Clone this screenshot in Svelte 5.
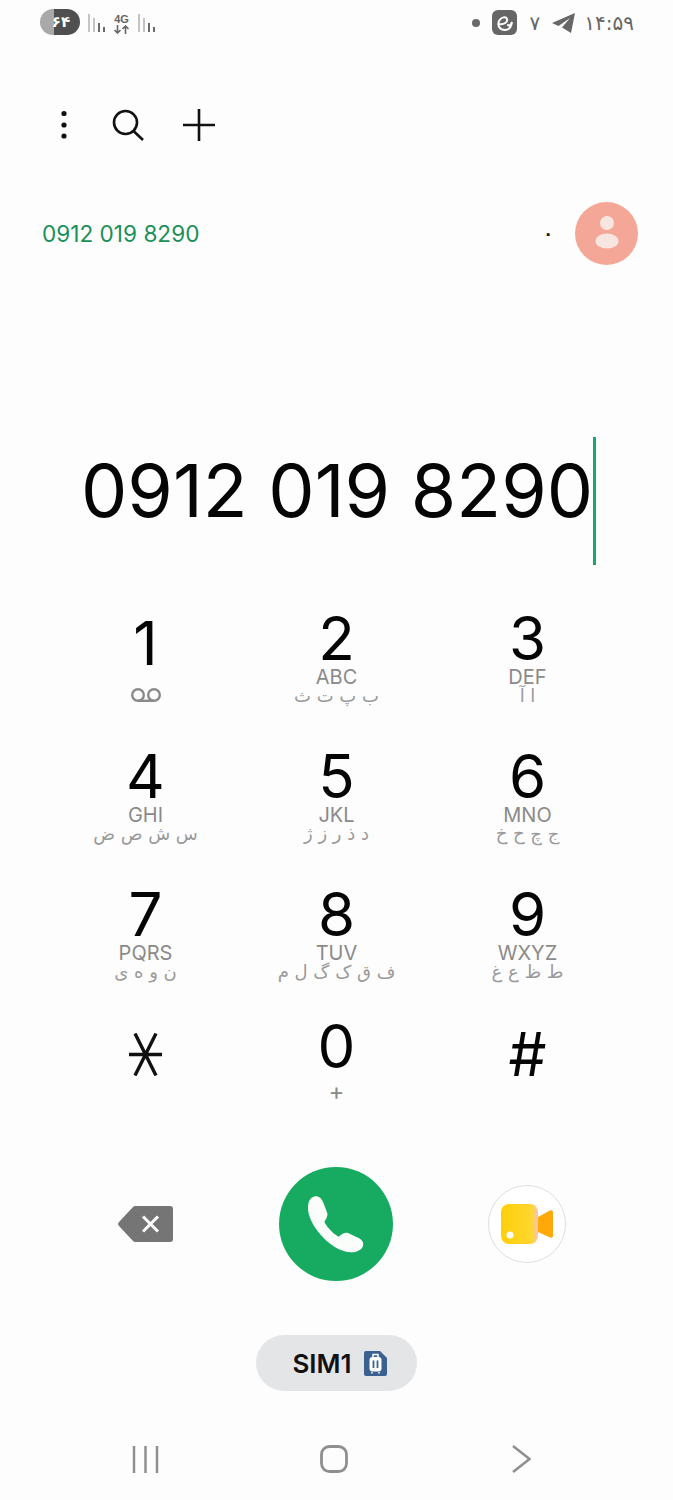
<script>
  const keys = [
    { digit: '1', voicemail: true },
    { digit: '2', latin: 'ABC', farsi: 'ب پ ت ث' },
    { digit: '3', latin: 'DEF', farsi: 'ا آ' },
    { digit: '4', latin: 'GHI', farsi: 'س ش ص ض' },
    { digit: '5', latin: 'JKL', farsi: 'د ذ ر ز ژ' },
    { digit: '6', latin: 'MNO', farsi: 'ج چ ح خ' },
    { digit: '7', latin: 'PQRS', farsi: 'ن و ه ی' },
    { digit: '8', latin: 'TUV', farsi: 'ف ق ک گ ل م' },
    { digit: '9', latin: 'WXYZ', farsi: 'ط ظ ع غ' },
    { star: true },
    { digit: '0', plus: true },
    { digit: '#', hash: true }
  ];
  const bars = [18, 14, 9, 5];
</script>

<div class="screen">
  <header class="status">
    <div class="status-side">
      <div class="battery"><span>۶۴</span></div>
      <div class="signal">
        {#each bars as h, i}<i class:on={i > 1} style="height: {h}px"></i>{/each}
      </div>
      <div class="net">
        <b>4G</b>
        <svg width="17" height="9" viewBox="0 0 17 9" fill="none" stroke="#666" stroke-width="1.6">
          <path d="M4.500 0v8M1.500 5l3 3 3-3M12.500 9V1M9.500 4l3-3 3 3" />
        </svg>
      </div>
      <div class="signal">
        {#each bars as h, i}<i class:on={i > 1} style="height: {h}px"></i>{/each}
      </div>
    </div>
    <div class="status-side right">
      <i class="notif-dot"></i>
      <svg width="25" height="25" viewBox="0 0 25 25">
        <rect width="25" height="25" rx="6" fill="#666" />
        <path d="M7 14c5 1 9-2 8-5-1-3-6-2-8 2-2 5 1 9 6 9 4 0 6-2 7-8-1 3-3 4-4 3" fill="none" stroke="#fff" stroke-width="2" stroke-linecap="round" />
      </svg>
      <span class="sb-num">۷</span>
      <svg class="plane" width="23" height="20" viewBox="0 0 23 20">
        <path d="M23 0 0 10l6.500 3L18 5l-8 9.500L19 20z" fill="#666" />
      </svg>
      <span class="sb-time">۱۴:۵۹</span>
    </div>
  </header>

  <nav class="toolbar">
    <svg width="10" height="32" viewBox="0 0 10 32" fill="#111">
      <circle cx="5" cy="4.500" r="2.600" /><circle cx="5" cy="16" r="2.600" /><circle cx="5" cy="27" r="2.600" />
    </svg>
    <svg width="32" height="32" viewBox="0 0 32 32" fill="none" stroke="#111" stroke-width="2.600">
      <circle cx="13.500" cy="13.500" r="11.500" /><path d="M21.500 22 31 31" />
    </svg>
    <svg width="32" height="32" viewBox="0 0 32 32" fill="none" stroke="#111" stroke-width="2.600">
      <path d="M16 0v32M0 16h32" />
    </svg>
  </nav>

  <section class="match">
    <span class="match-number">0912 019 8290</span>
    <span class="match-dot">۰</span>
    <div class="avatar">
      <svg width="32" height="36" viewBox="0 0 32 36" fill="#f7e6df">
        <circle cx="16" cy="8" r="7" /><ellipse cx="16" cy="26" rx="11.500" ry="7.500" />
      </svg>
    </div>
  </section>

  <section class="entry">
    <span class="entry-number">0912 019 8290</span><i class="caret"></i>
  </section>

  <section class="keypad">
    {#each keys as key}
      <div class="key">
        {#if key.star}
          <svg class="star" width="33" height="43" viewBox="0 0 33 43" fill="none" stroke="#111" stroke-width="3.400">
            <path d="M6 0.500 27 42.500M27 0.500 6 42.500M0 21.500h33" />
          </svg>
        {:else}
          <span class="digit" class:hash={key.hash} class:one={key.voicemail} class:zero={key.plus}>{key.digit}</span>
        {/if}
        {#if key.latin}
          <span class="latin">{key.latin}</span>
          <span class="farsi" dir="rtl">{key.farsi}</span>
        {/if}
        {#if key.voicemail}
          <svg class="voicemail" width="32" height="14" viewBox="0 0 32 14" fill="none" stroke="#8a8a8a" stroke-width="2.400">
            <circle cx="8" cy="7" r="5.800" /><circle cx="24" cy="7" r="5.800" /><path d="M8 12.800h16" />
          </svg>
        {/if}
        {#if key.plus}
          <span class="plus">+</span>
        {/if}
      </div>
    {/each}
  </section>

  <section class="actions">
    <svg width="55" height="36" viewBox="0 0 55 36">
      <path d="M17 0h35a3 3 0 0 1 3 3v30a3 3 0 0 1-3 3H17a3 3 0 0 1-2-1L1 20a3 3 0 0 1 0-4L15 1a3 3 0 0 1 2-1z" fill="#757575" />
      <path d="M25 10.500 40 25.500M40 10.500 25 25.500" stroke="#fff" stroke-width="3" />
    </svg>
    <button class="call" aria-label="Call">
      <svg width="60" height="60" viewBox="620 130 180 180">
        <path d="M628 155C632 143 642 136 652 137 662 138 668 146 672 156L684 188C686 196 680 206 675 214 685 232 702 250 718 258 726 252 736 244 746 247L778 262C788 267 794 276 791 286 788 298 770 306 752 305 722 303 688 282 660 248 636 218 620 186 628 155Z" fill="#fbfdfb" />
      </svg>
    </button>
    <button class="video" aria-label="Video call">
      <svg width="52" height="40" viewBox="0 0 52 40">
        <defs>
          <linearGradient id="cam" x1="0" x2="1" y1="0" y2="0">
            <stop offset="0" stop-color="#ffcf0a" />
            <stop offset="0.82" stop-color="#ffd62e" />
            <stop offset="1" stop-color="#f8c4b8" />
          </linearGradient>
        </defs>
        <rect x="0" y="0" width="37" height="40" rx="8" fill="url(#cam)" />
        <circle cx="9" cy="31" r="3.500" fill="#fff" />
        <path d="M37 13 49 6.500q3-1 3 2v23q0 3-3 2L37 28z" fill="#ffa908" />
      </svg>
    </button>
  </section>

  <div class="sim-row">
    <div class="sim">
      <span>SIM1</span>
      <svg width="23" height="25" viewBox="0 0 23 25">
        <path d="M2 0h14l7 7v16a2 2 0 0 1-2 2H2a2 2 0 0 1-2-2V2a2 2 0 0 1 2-2z" fill="#3a6190" />
        <path d="M9 6V3.500h5V6" fill="none" stroke="#fff" stroke-width="1.500" />
        <rect x="5.500" y="6" width="12" height="14.500" rx="3" fill="#fff" />
        <path d="M9.500 9.500v7.500M13.500 9.500v7.500" stroke="#3a6190" stroke-width="1.800" />
        <path d="M8 21v1.500M15 21v1.500" stroke="#fff" stroke-width="1.500" />
      </svg>
    </div>
  </div>

  <footer class="navbar">
    <svg width="27" height="27" viewBox="0 0 27 27" stroke="#8f8f8f" stroke-width="2.500">
      <path d="M2 0v27M13.500 0v27M25 0v27" />
    </svg>
    <svg class="home" width="28" height="28" viewBox="0 0 28 28" fill="none" stroke="#8f8f8f" stroke-width="2.800">
      <rect x="1.500" y="1.500" width="25" height="25" rx="8" />
    </svg>
    <svg width="19" height="28" viewBox="0 0 19 28" fill="none" stroke="#8f8f8f" stroke-width="2.500">
      <path d="M1 1 17.500 14 1 27" />
    </svg>
  </footer>
</div>

<style>
  :global(body) {
    margin: 0;
    background: #fdfdfe;
  }
  .screen {
    width: 673px;
    height: 1500px;
    overflow: hidden;
    font-family: Inter, "Liberation Sans", sans-serif;
    color: #0c0c0c;
    background: #fdfdfe;
  }

  /* status bar */
  .status {
    height: 45px;
    box-sizing: border-box;
    padding: 9px 39px 0 40px;
    display: flex;
    justify-content: space-between;
  }
  .status-side {
    display: flex;
    align-items: flex-start;
  }
  .status-side.right {
    align-items: center;
    height: 27px;
  }
  .battery {
    width: 40px;
    height: 26px;
    border-radius: 13px;
    background: linear-gradient(90deg, #a9a9a9 0 14px, #4f4f4f 14px);
    display: flex;
    align-items: center;
    justify-content: center;
  }
  .battery span {
    font: 700 15px "DejaVu Sans", sans-serif;
    color: #fff;
    margin-left: 2px;
  }
  .signal {
    display: flex;
    align-items: flex-end;
    gap: 3px;
    height: 18px;
    margin: 5px 0 0 8px;
  }
  .signal i {
    width: 2px;
    background: #c4c4c4;
  }
  .signal i.on {
    background: #6a6a6a;
  }
  .net {
    display: flex;
    flex-direction: column;
    align-items: center;
    margin: 4px 0 0 8px;
    width: 17px;
  }
  .net b {
    font: 700 11px/12px "Liberation Sans", sans-serif;
    color: #666;
  }
  .notif-dot {
    width: 8px;
    height: 8px;
    border-radius: 50%;
    background: #6a6a6a;
    margin-right: 12px;
  }
  .sb-num {
    font: 400 20px "DejaVu Sans", sans-serif;
    color: #666;
    margin: 0 12px 0 13px;
  }
  .sb-time {
    font: 400 20px "DejaVu Sans", sans-serif;
    color: #666;
    margin-left: 9px;
  }

  /* top actions */
  .toolbar {
    height: 32px;
    margin-top: 64px;
    padding-left: 59px;
    display: flex;
    align-items: center;
    gap: 43px;
  }
  .toolbar svg:nth-child(3) {
    margin-left: -4px;
  }

  /* suggested contact */
  .match {
    margin-top: 60px;
    padding: 0 35px 0 42px;
    height: 64px;
    display: flex;
    align-items: center;
  }
  .match-number {
    font-size: 22.6px;
    color: #1a9058;
  }
  .match-dot {
    margin-left: auto;
    margin-right: 22px;
    font: 700 16px "DejaVu Sans", sans-serif;
    color: #111;
  }
  .avatar {
    width: 63px;
    height: 63px;
    border-radius: 50%;
    background: #f4a796;
    display: flex;
    align-items: center;
    justify-content: center;
  }

  /* dialled number */
  .entry {
    margin-top: 172px;
    height: 128px;
    padding-left: 81px;
    display: flex;
    align-items: center;
  }
  .entry-number {
    font-size: 73.5px;
    color: #050505;
    line-height: 1;
    margin-bottom: 20px;
  }
  .caret {
    width: 3px;
    height: 128px;
    background: #1aa866;
  }

  /* dial pad */
  .keypad {
    margin-top: 46px;
    padding: 0 50px;
    display: grid;
    grid-template-columns: repeat(3, 191px);
    grid-auto-rows: 138px;
  }
  .key {
    display: flex;
    flex-direction: column;
    align-items: center;
  }
  .digit {
    font-size: 60px;
    line-height: 54px;
    color: #050505;
  }
  .digit.one {
    margin-top: 5px;
  }
  .digit.zero {
    margin-top: -6px;
  }
  .digit.hash {
    margin-top: 2px;
  }
  .latin {
    font-size: 20px;
    line-height: 18px;
    color: #8a8a8a;
    margin-top: 3px;
  }
  .farsi {
    font: 400 18px/20px "DejaVu Sans", sans-serif;
    color: #9a9a9a;
    white-space: nowrap;
  }
  .voicemail {
    margin-top: 18px;
  }
  .star {
    margin-top: 8px;
  }
  .plus {
    font-size: 24px;
    line-height: 24px;
    color: #8a8a8a;
    margin-top: 7px;
  }

  /* call row */
  .actions {
    margin-top: 4px;
    padding: 0 0 0 49.5px;
    display: grid;
    grid-template-columns: repeat(3, 191px);
    justify-items: center;
    align-items: center;
    height: 114px;
  }
  .call,
  .video {
    padding: 0;
    display: flex;
    align-items: center;
    justify-content: center;
    border-radius: 50%;
  }
  .call {
    width: 114px;
    height: 114px;
    border: 0;
    background: #17ab62;
  }
  .video {
    width: 78px;
    height: 78px;
    border: 1px solid #dfdfe1;
    background: #fff;
  }

  /* SIM selector */
  .sim-row {
    margin-top: 54px;
    display: flex;
    justify-content: center;
  }
  .sim {
    width: 161px;
    height: 56px;
    box-sizing: border-box;
    padding-left: 6px;
    border-radius: 28px;
    background: #e4e5e7;
    display: flex;
    align-items: center;
    justify-content: center;
    gap: 12px;
  }
  .sim span {
    font-size: 26px;
    font-weight: 600;
    color: #111;
  }

  /* system navigation */
  .navbar {
    margin-top: 54px;
    padding: 0 142px 0 132px;
    display: flex;
    justify-content: space-between;
    align-items: center;
  }
  .home {
    margin-left: -3px;
  }
</style>
